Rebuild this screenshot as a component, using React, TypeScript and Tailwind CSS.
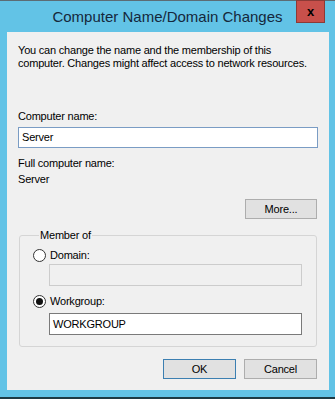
import React from "react";

function Radio({ checked }: { checked?: boolean }) {
  return (
    <span className="flex h-[13px] w-[13px] items-center justify-center rounded-full border border-[#333333] bg-white">
      {checked ? <span className="h-[7px] w-[7px] rounded-full bg-[#111111]" /> : null}
    </span>
  );
}

export default function App() {
  return (
    <div
      className="flex h-[399px] w-[335px] flex-col bg-[#62c3e6] text-[11px] leading-[13px] tracking-[-0.2px] text-black"
      style={{ fontFamily: '"Liberation Sans", Arial, sans-serif' }}
    >
      <div className="h-px bg-[#5c6c74]" />
      <div className="relative flex h-[31px] items-center justify-center">
        <span className="text-[15px] tracking-normal text-[#15283c]">
          Computer Name/Domain Changes
        </span>
        <div className="absolute left-[296px] top-[-1px] flex h-[23px] w-[29px] items-center justify-center border border-[#8c3a36] bg-[#c8504b]">
          <span className="text-[13px] font-bold leading-none tracking-normal text-black">x</span>
        </div>
      </div>
      <div className="ml-[7px] mr-[6px] flex h-[358px] flex-col bg-[#f0f0f0] px-[11px]">
        <p className="mt-[12px] whitespace-nowrap">
          You can change the name and the membership of this
          <br />
          computer. Changes might affect access to network resources.
        </p>
        <div className="mt-[40px]">Computer name:</div>
        <div className="mt-[4px] flex h-[21px] items-center border border-[#7a9cc4] bg-white px-[3px]">
          Server
        </div>
        <div className="mt-[7px] leading-[16px]">Full computer name:</div>
        <div className="leading-[16px]">Server</div>
        <div className="mt-[12px] flex justify-end pr-px">
          <button className="flex h-[20px] w-[72px] items-center justify-center border border-[#adadad] bg-[#e1e1e1]">
            More...
          </button>
        </div>
        <fieldset className="ml-px mr-px mt-[10px] rounded-[3px] border border-[#d5d5d5] pb-[11px] pl-[13px] pr-[14px]">
          <legend className="ml-[6px] px-px leading-[13px]">Member of</legend>
          <div className="mt-[7px] flex items-center gap-[4px]">
            <Radio />
            <span>Domain:</span>
          </div>
          <div className="ml-[16px] mt-[2px] h-[22px] border border-[#cccccc] bg-[#f0f0f0]" />
          <div className="mt-[9px] flex items-center gap-[4px]">
            <Radio checked />
            <span>Workgroup:</span>
          </div>
          <div className="ml-[16px] mt-[5px] flex h-[22px] items-center border border-[#7a7a7a] bg-white px-[3px]">
            WORKGROUP
          </div>
        </fieldset>
        <div className="mt-[12px] flex justify-end gap-[8px] pr-px">
          <button className="flex h-[20px] w-[73px] items-center justify-center border border-[#3c7fb1] bg-[#e1e1e1]">
            OK
          </button>
          <button className="flex h-[20px] w-[73px] items-center justify-center border border-[#adadad] bg-[#e1e1e1]">
            Cancel
          </button>
        </div>
      </div>
      <div className="flex-1" />
      <div className="h-[2px] bg-[#1d3a44]" />
    </div>
  );
}
